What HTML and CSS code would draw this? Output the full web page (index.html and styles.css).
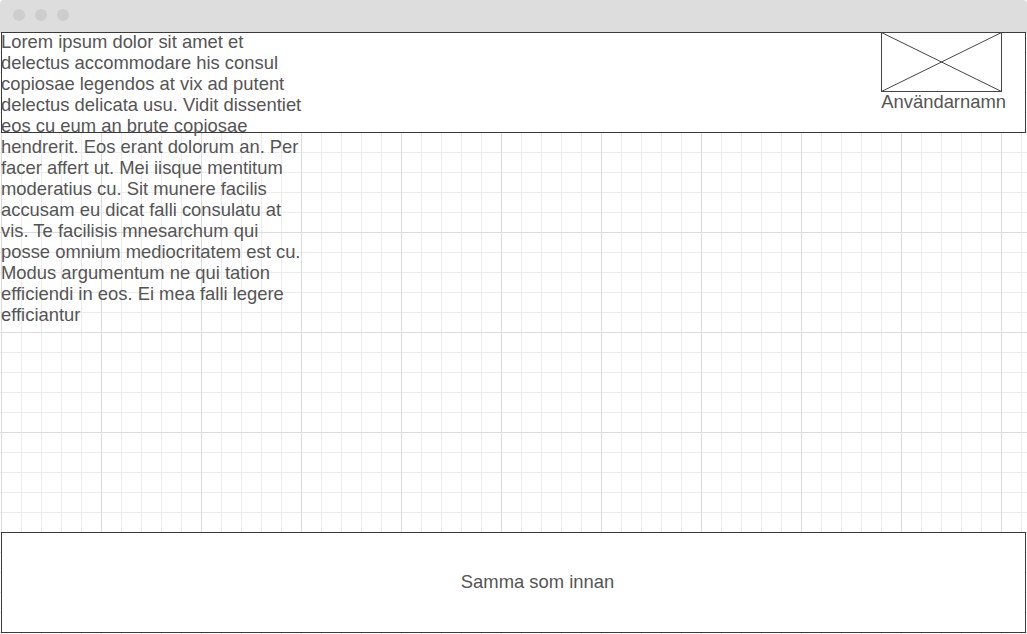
FILE: index.html
```html
<!DOCTYPE html>
<html lang="sv">
<head>
<meta charset="utf-8">
<title>Wireframe</title>
<link rel="stylesheet" href="styles.css">
</head>
<body>
<div class="window">
  <div class="titlebar">
    <span class="dot"></span><span class="dot"></span><span class="dot"></span>
  </div>
  <div class="canvas">
    <header class="header">
      <p class="intro">Lorem ipsum dolor sit amet et delectus accommodare his consul copiosae legendos at vix ad putent delectus delicata usu. Vidit dissentiet eos cu eum an brute copiosae hendrerit. Eos erant dolorum an. Per facer affert ut. Mei iisque mentitum moderatius cu. Sit munere facilis accusam eu dicat falli consulatu at vis. Te facilisis mnesarchum qui posse omnium mediocritatem est cu. Modus argumentum ne qui tation efficiendi in eos. Ei mea falli legere efficiantur</p>
      <div class="user">
        <svg class="avatar" width="121" height="60" viewBox="0 0 121 60">
          <rect x="0.5" y="0.5" width="120" height="59" fill="#fff" stroke="#444" stroke-width="1"/>
          <line x1="0.5" y1="0.5" x2="120.5" y2="59.5" stroke="#444" stroke-width="1"/>
          <line x1="120.5" y1="0.5" x2="0.5" y2="59.5" stroke="#444" stroke-width="1"/>
        </svg>
        <span class="username">Användarnamn</span>
      </div>
    </header>
    <main class="middle"></main>
    <footer class="footer">Samma som innan</footer>
  </div>
</div>
</body>
</html>
```

FILE: styles.css
```css
* { box-sizing: border-box; }
html, body { margin: 0; padding: 0; }
body {
  width: 1027px;
  height: 634px;
  overflow: hidden;
  background: #fff;
  font-family: "Liberation Sans", Arial, sans-serif;
  color: #555;
  font-size: 18.4px;
  line-height: 21px;
}
.window { display: flex; flex-direction: column; height: 634px; }
.titlebar {
  height: 32px;
  flex: none;
  background: #dddddd;
  border-radius: 4px 4px 0 0;
  display: flex;
  align-items: center;
  gap: 10px;
  padding: 0 0 2px 13px;
}
.dot {
  width: 12px;
  height: 12px;
  border-radius: 50%;
  background: #cdcdcd;
}
.canvas {
  flex: 1;
  display: flex;
  flex-direction: column;
  padding: 0 1px 1px 1px;
  background-color: #fff;
  background-image:
    linear-gradient(to right, #dcdcdc 1px, transparent 1px),
    linear-gradient(to bottom, #dcdcdc 1px, transparent 1px),
    linear-gradient(to right, #ececec 1px, transparent 1px),
    linear-gradient(to bottom, #ececec 1px, transparent 1px);
  background-size: 100px 100px, 100px 100px, 20px 20px, 20px 20px;
  background-position: 1px 0, 1px 0, 1px 0, 1px 0;
}
.header {
  height: 101px;
  flex: none;
  border: 1px solid #3a3a3a;
  background: #fff;
  display: flex;
  justify-content: space-between;
  align-items: flex-start;
  padding-right: 19px;
  position: relative;
  z-index: 1;
}
.intro {
  margin: -2px 0 0 -1px;
  width: 304px;
  color: #555;
}
.user {
  display: flex;
  flex-direction: column;
  align-items: flex-start;
}
.avatar { display: block; margin-top: -1px; }
.username { margin-top: -1px; white-space: nowrap; }
.middle { flex: 1; }
.footer {
  height: 101px;
  flex: none;
  border: 1px solid #3a3a3a;
  background: #fff;
  display: flex;
  align-items: center;
  justify-content: center;
  padding-left: 48px;
  padding-bottom: 2px;
}
```
